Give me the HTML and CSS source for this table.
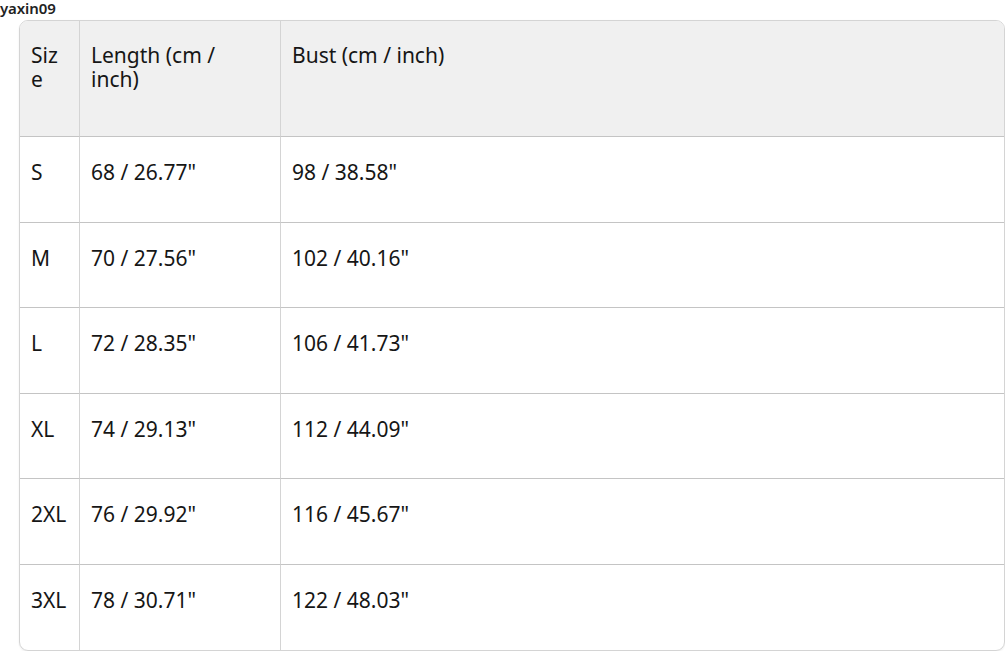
FILE: index.html
```html
<!DOCTYPE html>
<html>
<head>
<meta charset="utf-8">
<link rel="stylesheet" href="styles.css">
</head>
<body>
<div class="author">yaxin09</div>
<div class="wrap">
<table class="sizes">
  <colgroup>
    <col class="c-size">
    <col class="c-len">
    <col class="c-bust">
  </colgroup>
  <thead>
    <tr><th>Size</th><th>Length (cm / inch)</th><th>Bust (cm / inch)</th></tr>
  </thead>
  <tbody>
    <tr><td>S</td><td>68 / 26.77"</td><td>98 / 38.58"</td></tr>
    <tr><td>M</td><td>70 / 27.56"</td><td>102 / 40.16"</td></tr>
    <tr><td>L</td><td>72 / 28.35"</td><td>106 / 41.73"</td></tr>
    <tr><td>XL</td><td>74 / 29.13"</td><td>112 / 44.09"</td></tr>
    <tr><td>2XL</td><td>76 / 29.92"</td><td>116 / 45.67"</td></tr>
    <tr><td>3XL</td><td>78 / 30.71"</td><td>122 / 48.03"</td></tr>
  </tbody>
</table>
</div>
</body>
</html>
```

FILE: styles.css
```css
html, body {
  margin: 0;
  padding: 0;
  background: #ffffff;
}
body {
  font-family: "Noto Sans", "Open Sans", sans-serif;
  color: #161616;
  width: 1005px;
  overflow: hidden;
}
.author {
  font-size: 15px;
  font-weight: 600;
  line-height: 17px;
  height: 20px;
  color: #222;
  letter-spacing: -0.1px;
}
.wrap {
  padding-left: 19px;
}
.sizes {
  width: 986px;
  table-layout: fixed;
  border-collapse: separate;
  border-spacing: 0;
  border: 1px solid #d4d4d4;
  border-radius: 9px;
  overflow: hidden;
  box-shadow: 0 1px 2px rgba(0,0,0,0.08);
  font-size: 21px;
  line-height: 24px;
}
.c-size { width: 59px; }
.c-len { width: 201px; }
.sizes th, .sizes td {
  text-align: left;
  font-weight: 400;
  vertical-align: top;
  padding: 22px 12px 0 11px;
}
.sizes th:first-child {
  padding-right: 14px;
  word-break: break-all;
}
.sizes th:nth-child(2) {
  padding-right: 30px;
}
.sizes th {
  background: #f0f0f0;
  height: 93px;
  border-bottom: 1px solid #c4c4c4;
}
.sizes td {
  padding-top: 23px;
  height: 61.6px;
}
.sizes tbody tr + tr td {
  border-top: 1px solid #c4c4c4;
}
.sizes th + th, .sizes td + td {
  border-left: 1px solid #d4d4d4;
}
```
